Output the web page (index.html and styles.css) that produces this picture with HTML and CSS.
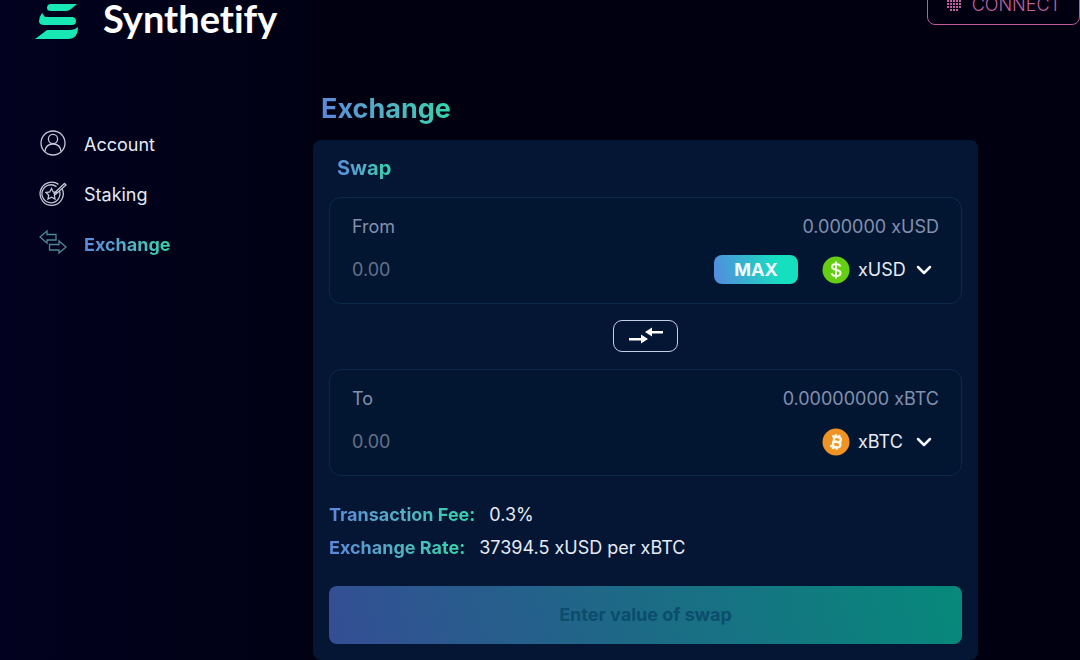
FILE: index.html
```html
<!DOCTYPE html>
<html lang="en">
<head>
    <meta charset="UTF-8">
    <meta name="viewport" content="width=device-width, initial-scale=1">
    <title>Synthetify</title>
    <link rel="stylesheet" href="styles.css">
</head>
<body>

<div class="page">
    <aside class="sidebar">
        <a href="#" class="logo">
            <svg width="44" height="36" viewBox="0 0 44 36">
                <path d="M16 0H42L36 5Q34 7 31 7H16Q12 7 12 4Q12 0 16 0Z"/>
                <path d="M7 9L10 13H38Q41 14 41 17Q41 21 37 21H9Q4 21 4 17Q4 13 7 9Z"/>
                <path d="M12 26H36Q40 26 43 23Q43 35 33 35H0Z"/>
            </svg>
            <span>Synthetify</span>
        </a>
        <nav class="menu">
            <a href="#">
                <svg width="28" height="28" viewBox="0 0 28 28">
                    <circle cx="14" cy="13" r="12"/>
                    <circle cx="14" cy="9" r="4.6"/>
                    <path d="M6 21.500C6.500 16.500 9.500 14 14 14S21.500 16.500 22 21.500"/>
                </svg>
                <span>Account</span>
            </a>
            <a href="#">
                <svg width="28" height="28" viewBox="0 0 28 28">
                    <path d="M23 8.500A11.600 11.600 0 1 1 19.500 4.400"/>
                    <path d="M20.500 11A9 9 0 1 1 17.500 6.700"/>
                    <path d="M12.500 8.500L14.200 12L18 12.500L15.300 15.200L16 19L12.500 17.200L9 19L9.700 15.200L7 12.500L10.800 12Z"/>
                    <path d="M15 13.500L25.500 3.500L27 5L16.500 14.500Z"/>
                </svg>
                <span>Staking</span>
            </a>
            <a href="#" class="on">
                <svg width="28" height="28" viewBox="0 0 28 28">
                    <path d="M1 7L8 1V4.500H17V10H8V13Z"/>
                    <path d="M27 17L20 11V14.500H10.500V20H20V23Z"/>
                </svg>
                <span>Exchange</span>
            </a>
        </nav>
    </aside>

    <main class="main">
        <header class="header">
            <button type="button" class="connect">
                <svg width="16" height="16" viewBox="0 0 16 16">
                    <path d="M4 1H12M1 4H16M1 7H16M1 10H16M4 13H12"/>
                </svg>
                CONNECT
            </button>
        </header>
        <h1>Exchange</h1>
        <form class="card">
            <h2>Swap</h2>

            <div class="field">
                <div class="row">
                    <label for="from">From</label>
                    <span>0.000000 xUSD</span>
                </div>
                <div class="row">
                    <input type="text" id="from" placeholder="0.00">
                    <button type="button" class="max">MAX</button>
                    <div class="token">
                        <svg class="coin" width="28" height="28" viewBox="0 0 28 28">
                            <circle cx="14" cy="14" r="13.500" fill="#64cf12"/>
                            <path d="M18.300 10.500C17.800 8.800 16.200 8 14 8C11.600 8 10 9.100 10 10.900C10 15 18.500 12.500 18.500 17C18.500 19 16.700 20 14.200 20C11.600 20 10 19 9.500 17.200M14 5.500V22.500" fill="none" stroke="#f3ffe6" stroke-width="2"/>
                        </svg>
                        <select aria-label="From token">
                            <option>xUSD</option>
                            <option>xBTC</option>
                        </select>
                        <svg class="arrow" width="16" height="10" viewBox="0 0 16 10"><path d="M2 2L8 8L14 2"/></svg>
                    </div>
                </div>
            </div>

            <button type="button" class="switch" aria-label="Switch tokens">
                <svg width="34" height="18" viewBox="0 0 34 18">
                    <path d="M0 11H12V7.500L19 12L12 16.500V13.500H0Z"/>
                    <path d="M34 4H23V.500L16 5L23 9.500V6.500H34Z"/>
                </svg>
            </button>

            <div class="field">
                <div class="row">
                    <label for="to">To</label>
                    <span>0.00000000 xBTC</span>
                </div>
                <div class="row">
                    <input type="text" id="to" placeholder="0.00">
                    <div class="token">
                        <svg class="coin" width="28" height="28" viewBox="0 0 28 28">
                            <circle cx="14" cy="14" r="13.500" fill="#ee9324"/>
                            <g transform="rotate(12 14 14)" fill="none" stroke="#fff8e8" stroke-width="2.400">
                                <path d="M9 9H15.500C19.300 9 19.300 13.700 15.500 13.700H11.500M15.500 13.700C20 13.700 20 19 15.500 19H9M11.500 9V19M12.500 6.500V9M16 6.500V9M12.500 19V21.500M16 19V21.500"/>
                            </g>
                        </svg>
                        <select aria-label="To token">
                            <option>xBTC</option>
                            <option>xUSD</option>
                        </select>
                        <svg class="arrow" width="16" height="10" viewBox="0 0 16 10"><path d="M2 2L8 8L14 2"/></svg>
                    </div>
                </div>
            </div>

            <dl class="info">
                <div><dt>Transaction Fee:</dt><dd>0.3%</dd></div>
                <div><dt>Exchange Rate:</dt><dd>37394.5 xUSD per xBTC</dd></div>
            </dl>

            <button type="submit" class="submit" disabled>Enter value of swap</button>
        </form>
    </main>
</div>

</body>
</html>
```
FILE: styles.css
```css
*{ margin: 0; padding: 0; box-sizing: border-box;}
body {background: #000010;color: #e6eaf5;font-family: Inter, "Liberation Sans", sans-serif;font-size: 18px;line-height: 24px;}
a {color: inherit;text-decoration: none;}
button, input, select {font: inherit;color: inherit;border: 0;background: none;outline: none;}
button {cursor: pointer;}
svg {display: block;flex: none;}
h1, h2, dt, .menu .on span {width: fit-content;background: linear-gradient(75deg, #5c86dc, #54b0c4 50%, #2fd9a8);-webkit-background-clip: text;background-clip: text;color: transparent;font-weight: 700;}

.page {display: grid;grid-template-columns: 313px 1fr;min-height: 100vh;}
.sidebar {background: linear-gradient(90deg, #02011f, #010114);}
.logo {display: flex;align-items: center;gap: 24px;height: 40px;padding-left: 35px;font-family: Lato, sans-serif;font-size: 38px;line-height: 40px;font-weight: 700;font-variant-ligatures: none;color: #fff;}
.logo svg {fill: #17e8b4;margin-top: 4px;}
.logo span {margin-top: -4px;}
.menu {display: flex;flex-direction: column;gap: 22px;padding: 90px 0 0 39px;}
.menu a {display: flex;align-items: center;gap: 17px;height: 28px;}
.menu span {padding-top: 2px;}
.menu svg {fill: none;stroke: #c3c6d6;stroke-width: 1.3;}
.menu .on svg {stroke: #4f8790;}

.main {display: flex;flex-direction: column;}
/* the header is scrolled halfway out */
.header {display: flex;justify-content: flex-end;margin-top: -16px;}
.connect {display: flex;align-items: center;gap: 10px;height: 41px;padding: 0 18px;border: 1px solid #bd5b9d;border-radius: 8px;color: #c1619f;font-weight: 300;}
.connect svg {stroke: #c1619f;stroke-width: 2;stroke-dasharray: 2 1;}
h1 {margin: 66px 0 13px 8px;font-size: 27px;line-height: 36px;}
.card {display: flex;flex-direction: column;margin-right: 102px;padding: 16px;background: #041634;border-radius: 8px;}
h2 {margin: 0 0 17px 8px;font-size: 20px;line-height: 24px;}

.field {display: flex;flex-direction: column;gap: 16px;height: 107px;padding: 17px 22px;border: 1px solid #0c2a48;border-radius: 12px;background: #031631;}
.row {display: flex;align-items: center;justify-content: space-between;color: #8290ae;}
.row input {flex: 1;min-width: 0;height: 28px;}
.row input::placeholder {color: #64728a;opacity: 1;}
.max {width: 84px;height: 29px;margin-right: 24px;border-radius: 8px;background: linear-gradient(75deg, #5688e0, #15dfc0 75%);color: #f1fbff;font-weight: 700;}
.token {display: flex;align-items: center;height: 29px;padding-right: 7px;color: #e6eaf5;}
.token select {width: 58px;margin-left: 8px;appearance: none;cursor: pointer;}
.arrow {fill: none;stroke: #f4f7ff;stroke-width: 2.5;stroke-linecap: round;stroke-linejoin: round;}
.switch {display: flex;align-items: center;justify-content: center;align-self: center;width: 65px;height: 32px;margin: 16px 0 17px;border: 1px solid #c5cfe2;border-radius: 9px;}
.switch svg {fill: #fff;}

.info {display: flex;flex-direction: column;gap: 9px;margin: 27px 0 26px;}
.info div {display: flex;gap: 14px;}
.submit {height: 58px;border-radius: 8px;background: linear-gradient(75deg, #344e94, #1c6b86 50%, #06897a);color: #0c4c6c;font-weight: 700;cursor: default;}
```
